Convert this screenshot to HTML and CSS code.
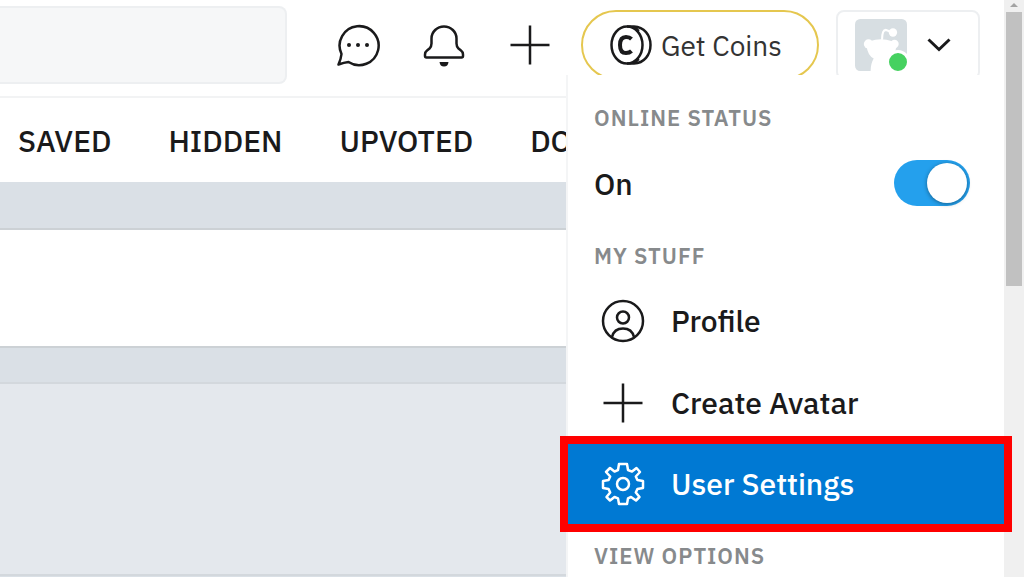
FILE: index.html
```html
<!DOCTYPE html>
<html lang="en">
<head>
    <meta charset="UTF-8">
    <meta name="viewport" content="width=device-width, initial-scale=1.0">
    <title>User Profile</title>
    <link rel="stylesheet" href="styles.css">
</head>
<body>
    <div class="page">
        <header class="header">
            <input type="search" class="search" aria-label="Search">
            <div class="actions">
                <button class="icon-btn" aria-label="Chat">
                    <svg class="icon" viewBox="0 0 44 44">
                        <path d="M5.500 31A19.500 19.500 0 1 1 12.500 39Q8 39.500 2.500 41.500Q5 36 5.500 31Z" />
                        <g class="solid"><circle cx="13" cy="22" r="2" /><circle cx="22" cy="22" r="2" /><circle cx="31" cy="22" r="2" /></g>
                    </svg>
                </button>
                <button class="icon-btn" aria-label="Notifications">
                    <svg class="icon" viewBox="0 0 44 44">
                        <path d="M4.500 34.500H39.500Q41 34.500 41 33V31.500Q41 29 39 27.500L36.500 25.500Q34.500 23.500 34.500 20.500V15.500A12.500 12 0 0 0 9.500 15.500V20.500Q9.500 23.500 7.500 25.500L5 27.500Q3 29 3 31.500V33Q3 34.500 4.500 34.500Z" />
                        <path class="solid" d="M17.500 39H26.500Q26 43.500 22 43.500Q18 43.500 17.500 39Z" />
                    </svg>
                </button>
                <button class="icon-btn" aria-label="Create post">
                    <svg class="icon" viewBox="0 0 44 44"><path d="M2.500 22H41.500M22 2.500V41.500" /></svg>
                </button>
            </div>
            <button class="coins">
                <svg class="icon" viewBox="0 0 44 44">
                    <ellipse cx="18" cy="22" rx="15.500" ry="18.500" />
                    <path d="M18 3.500H25C35 4 41.500 12 41.500 22S35 40 25 40.500H18M25 4.500L30 8M25 39.500L30 36" />
                    <path class="thick" d="M22.500 16Q20.500 14 17 14Q11 14 11 22T17 30Q20.500 30 22.500 28" />
                </svg>
                Get Coins
            </button>
            <button class="account" aria-label="Account menu" aria-expanded="true">
                <span class="avatar">
                    <svg viewBox="0 0 50 50">
                        <rect width="50" height="50" rx="5" fill="#d7dee2" />
                        <path d="M11 25H40Q39 35 32 37L35 50H15Q15 43 18 38Q12 35 11 25Z" fill="#fff" />
                        <ellipse cx="25" cy="25" rx="14" ry="5.500" fill="#fff" />
                        <circle cx="13" cy="24" r="4.500" fill="#fff" />
                        <circle cx="38" cy="24" r="4" fill="#fff" />
                        <path d="M26 20Q26 10 30 10.500L36 13" fill="none" stroke="#fff" stroke-width="2" />
                        <circle cx="36.500" cy="13" r="4" fill="#fff" />
                    </svg>
                    <span class="online-dot"></span>
                </span>
                <svg class="chevron" viewBox="0 0 24 14"><path d="M1.500 1.500L12 11.500L22.500 1.500" /></svg>
            </button>
        </header>

        <nav class="tabs">
            <a href="#">SAVED</a>
            <a href="#">HIDDEN</a>
            <a href="#">UPVOTED</a>
            <a href="#">DOWNVOTED</a>
        </nav>

        <main class="content">
            <div class="sort-bar"></div>
            <div class="posts"><div class="post"></div></div>
        </main>

        <div class="menu">
            <h3>ONLINE STATUS</h3>
            <div class="status">
                <label for="online">On</label>
                <input type="checkbox" id="online" class="switch" checked>
            </div>
            <h3>MY STUFF</h3>
            <a class="item" href="#">
                <svg class="icon" viewBox="0 0 44 44">
                    <circle cx="22" cy="22" r="20" />
                    <circle cx="22" cy="18.500" r="6" />
                    <path d="M11 38Q13 29.500 22 29.500T33 38" />
                </svg>
                Profile
            </a>
            <a class="item" href="#">
                <svg class="icon" viewBox="0 0 44 44"><path d="M2.500 22H41.500M22 2.500V41.500" /></svg>
                Create Avatar
            </a>
            <a class="item selected" href="#">
                <svg class="icon" viewBox="0 0 44 44">
                    <path d="M18 2H26L27 8L31 9.600L35.500 6L39 10L34.800 14.500L36.400 18L42 19V26L36.400 27L34.800 30.500L38.500 35L35 38.500L30 35L27 36.400L26 42H18L17 36.400L13.500 35L9 38.500L5.500 35L9.200 30.500L7.600 27L2 26V19L7.600 18L9.200 14.500L5 10L9 6L13.500 9.600L17 8Z" />
                    <circle cx="22" cy="22" r="6" />
                </svg>
                User Settings
            </a>
            <h3>VIEW OPTIONS</h3>
        </div>
    </div>

    <div class="scrollbar">
        <span class="arrow"></span>
        <span class="thumb"></span>
    </div>
</body>
</html>
```
FILE: styles.css
```css
* {
    box-sizing: border-box;
}
body {
    display: flex;
    height: 100vh;
    margin: 0;
    overflow: hidden;
    font-family: "IBM Plex Sans", "Noto Sans", sans-serif;
    font-size: 30px;
    color: #1a1a1b;
    background-color: #fff;
}
a {
    color: inherit;
    text-decoration: none;
}
button {
    padding: 0;
    border: none;
    background: none;
    font: inherit;
    color: inherit;
    cursor: pointer;
}
.page {
    position: relative;
    display: flex;
    flex: 1;
    flex-direction: column;
    min-width: 0;
}
.icon {
    display: block;
    flex: none;
    width: 44px;
    height: 44px;
    fill: none;
    stroke: currentColor;
    stroke-width: 2.5;
    stroke-linejoin: round;
}
.icon .solid {
    fill: currentColor;
    stroke: none;
}
.icon .thick {
    stroke-width: 4;
}

/* top bar */
.header {
    display: flex;
    align-items: flex-start;
    height: 98px;
    padding-right: 24px;
    border-bottom: 2px solid #f2f3f4;
}
.search {
    flex: 1;
    min-width: 0;
    height: 78px;
    margin-top: 6px;
    padding: 0 24px;
    border: 2px solid #edeff1;
    border-left: none;
    border-radius: 0 8px 8px 0;
    background-color: #f6f7f8;
    font: inherit;
}
.actions {
    display: flex;
    gap: 42px;
    margin: 23px 29px 0 49px;
}
.coins {
    display: flex;
    align-items: center;
    gap: 8px;
    width: 238px;
    height: 70px;
    margin-top: 10px;
    padding-left: 26px;
    border: 2px solid #e5c74f;
    border-radius: 35px;
    font-size: 28px;
    color: #333;
    white-space: nowrap;
}
.coins .icon {
    color: #1a1a1b;
}
.account {
    display: flex;
    align-items: center;
    gap: 20px;
    width: 144px;
    height: 70px;
    margin-top: 10px;
    margin-left: 17px;
    padding-left: 17px;
    border: 2px solid #edeff1;
    border-radius: 8px;
}
.avatar {
    position: relative;
    width: 52px;
    height: 52px;
}
.avatar svg {
    display: block;
}
.online-dot {
    position: absolute;
    right: -3px;
    bottom: -3px;
    width: 24px;
    height: 24px;
    border: 3px solid #fff;
    border-radius: 50%;
    background-color: #46d160;
}
.chevron {
    width: 24px;
    height: 14px;
    fill: none;
    stroke: currentColor;
    stroke-width: 3;
}

/* profile tabs */
.tabs {
    display: flex;
    align-items: center;
    gap: 57px;
    height: 84px;
    margin-right: 437px;
    padding-left: 18px;
    overflow: hidden;
    font-weight: 500;
}
.tabs a {
    flex: none;
}
.tabs a:last-child {
    flex: 1;
    min-width: 0;
    overflow: hidden;
}

/* page body */
.content {
    flex: 1;
    padding-top: 46px;
    background-color: #dae0e6;
}
.sort-bar {
    height: 120px;
    border-top: 2px solid #ccd1d5;
    border-bottom: 2px solid #ccd1d5;
    background-color: #fff;
}
.posts {
    margin-top: 34px;
    border-top: 2px solid #d3d8dd;
}
.post {
    height: 192px;
    border-bottom: 2px solid #d3d8dd;
    background-color: #e4e8ed;
}

/* account dropdown */
.menu {
    position: absolute;
    top: 75px;
    right: 0;
    width: 438px;
    padding: 11px 0;
    border-left: 2px solid #f4f5f6;
    background-color: #fff;
    font-weight: 500;
}
.menu h3 {
    margin: 16px 26px 8px;
    font-size: 22px;
    font-weight: 600;
    line-height: 32px;
    letter-spacing: 1px;
    color: #878a8c;
}
.status {
    display: flex;
    align-items: center;
    justify-content: space-between;
    height: 82px;
    padding: 0 34px 0 26px;
}
.switch {
    display: flex;
    align-items: center;
    justify-content: flex-end;
    width: 76px;
    height: 46px;
    margin: 0;
    padding: 3px;
    border-radius: 23px;
    background-color: #24a0ed;
    appearance: none;
    cursor: pointer;
}
.switch::before {
    content: "";
    width: 40px;
    height: 40px;
    border-radius: 50%;
    background-color: #fff;
    box-shadow: 0 1px 4px rgba(0, 0, 0, 0.4);
}
.switch:not(:checked) {
    justify-content: flex-start;
    background-color: #edeff1;
}
.item {
    display: flex;
    align-items: center;
    gap: 26px;
    height: 82px;
    padding-left: 33px;
    line-height: 36px;
}
.item.selected {
    position: relative;
    height: 80px;
    color: #fff;
    background-color: #0079d3;
    outline: 8px solid #f00;
}

/* window scrollbar */
.scrollbar {
    display: flex;
    flex-direction: column;
    align-items: center;
    width: 20px;
    background-color: #f0f0f0;
}
.arrow {
    margin: 3px 0 5px;
    border: 4px solid transparent;
    border-top: none;
    border-bottom-color: #a3a3a3;
}
.thumb {
    width: 16px;
    height: 274px;
    background-color: #c1c1c1;
}
```
